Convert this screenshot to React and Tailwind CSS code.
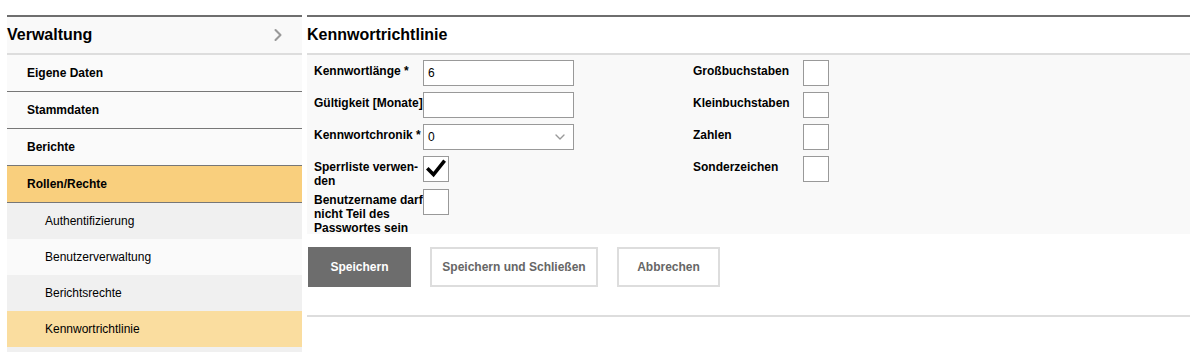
import { ChevronRight, ChevronDown } from 'lucide-react';

const NAV = [
  { label: 'Eigene Daten' },
  { label: 'Stammdaten' },
  { label: 'Berichte' },
  { label: 'Rollen/Rechte', active: true },
];

const SUB = [
  { label: 'Authentifizierung', bg: 'bg-[#f0f0f0]' },
  { label: 'Benutzerverwaltung', bg: 'bg-[#fafafa]' },
  { label: 'Berichtsrechte', bg: 'bg-[#f0f0f0]' },
  { label: 'Kennwortrichtlinie', bg: 'bg-[#fadd9f]' },
];

const FLAGS = ['Großbuchstaben', 'Kleinbuchstaben', 'Zahlen', 'Sonderzeichen'];

function Box({ checked }) {
  return (
    <div className="w-[26px] h-[26px] bg-white border border-[#999] flex items-center justify-center shrink-0">
      {checked && (
        <svg width="20" height="20" viewBox="0 0 20 20">
          <path d="M2.5 10.5 L7.5 15.5 L17.5 3" fill="none" stroke="#000" strokeWidth="3.6" strokeLinecap="square" />
        </svg>
      )}
    </div>
  );
}

function Sidebar() {
  return (
    <div className="w-[295px] shrink-0 border-t-2 border-[#6e6e6e]">
      <div className="h-[38px] bg-[#f9f9f9] flex items-center justify-between pr-[14px] border-b-2 border-[#dddddd]">
        <span className="text-[16px] font-bold text-black">Verwaltung</span>
        <ChevronRight size={20} strokeWidth={2.5} className="text-[#999]" />
      </div>
      {NAV.map(n => (
        <div key={n.label}
          className={`h-[37px] pl-[20px] flex items-center border-b border-[#777] text-[12px] font-bold text-black ${n.active ? 'bg-[#f9cf7d]' : 'bg-[#fafafa]'}`}>
          {n.label}
        </div>
      ))}
      {SUB.map(s => (
        <div key={s.label} className={`h-[36px] pl-[38px] flex items-center text-[12px] text-black ${s.bg}`}>
          {s.label}
        </div>
      ))}
      <div className="h-[10px] bg-[#f0f0f0]" />
    </div>
  );
}

function Field({ label, h = 'h-[26px]', children }) {
  return (
    <div className={`flex items-start ${h}`}>
      <div className="w-[109px] pt-[4px] text-[12px] font-bold leading-[14px] text-black">{label}</div>
      {children}
    </div>
  );
}

function Form() {
  return (
    <div className="bg-[#f9f9f9] pl-[7px] pt-[5px] flex">
      <div className="w-[379px] flex flex-col gap-[6px]">
        <Field label="Kennwortlänge *">
          <div className="w-[151px] h-[26px] bg-white border border-[#999] pl-[4px] flex items-center text-[12px]">6</div>
        </Field>
        <Field label="Gültigkeit [Monate]">
          <div className="w-[151px] h-[26px] bg-white border border-[#999]" />
        </Field>
        <Field label="Kennwortchronik *">
          <div className="w-[151px] h-[26px] bg-white border border-[#999] pl-[4px] pr-[5px] flex items-center justify-between text-[12px]">
            <span>0</span>
            <ChevronDown size={16} strokeWidth={2} className="text-[#999]" />
          </div>
        </Field>
        <Field label={<>Sperrliste verwen&shy;den</>} h="h-[27px]">
          <Box checked />
        </Field>
        <Field label="Benutzername darf nicht Teil des Passwortes sein" h="h-[45px]">
          <Box />
        </Field>
      </div>
      <div className="flex flex-col gap-[6px]">
        {FLAGS.map(f => (
          <div key={f} className="flex items-start">
            <div className="w-[110px] pt-[4px] text-[12px] font-bold leading-[14px] text-black">{f}</div>
            <Box />
          </div>
        ))}
      </div>
    </div>
  );
}

export default function App() {
  return (
    <div className="w-[1204px] h-[352px] bg-white flex pl-[7px] pt-[15px] gap-[5px] font-['Liberation_Sans',Arial,sans-serif] overflow-hidden">
      <Sidebar />
      <div className="w-[883px] shrink-0">
        <div className="border-t-2 border-[#6e6e6e] h-[40px] flex items-center border-b-2 border-b-[#dddddd]">
          <span className="text-[16px] font-bold text-black">Kennwortrichtlinie</span>
        </div>
        <Form />
        <div className="flex gap-[19px] pl-[1px] mt-[13px]">
          <button className="w-[103px] h-[40px] bg-[#6d6d6d] text-white text-[12px] font-bold">Speichern</button>
          <button className="w-[168px] h-[40px] bg-white border-2 border-[#dddddd] text-[#666] text-[12px] font-bold">Speichern und Schließen</button>
          <button className="w-[103px] h-[40px] bg-white border-2 border-[#dddddd] text-[#666] text-[12px] font-bold">Abbrechen</button>
        </div>
        <div className="mt-[28px] h-[2px] bg-[#dddddd]" />
      </div>
    </div>
  );
}
